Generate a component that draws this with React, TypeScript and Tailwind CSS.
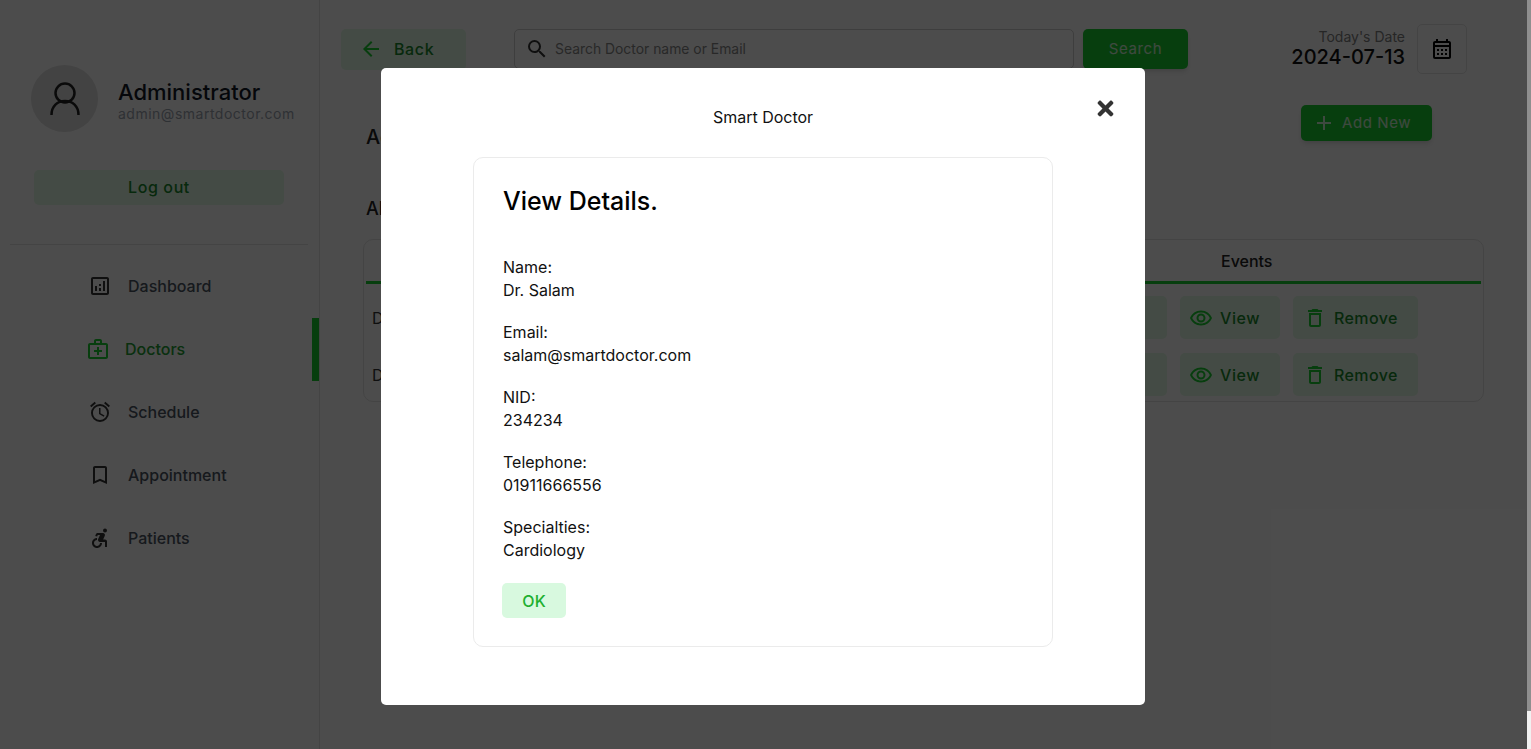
import React from "react";
import {
  MdOutlineAnalytics,
  MdOutlineMedicalServices,
  MdOutlineAlarm,
  MdOutlineBookmarkBorder,
  MdAccessibleForward,
  MdOutlineCalendarMonth,
  MdSearch,
  MdArrowBack,
  MdOutlineRemoveRedEye,
  MdOutlineDelete,
  MdOutlineEdit,
  MdAdd,
} from "react-icons/md";
import { FaTimes } from "react-icons/fa";

const nav = [
  { label: "Dashboard", Icon: MdOutlineAnalytics },
  { label: "Doctors", Icon: MdOutlineMedicalServices, active: true },
  { label: "Schedule", Icon: MdOutlineAlarm },
  { label: "Appointment", Icon: MdOutlineBookmarkBorder },
  { label: "Patients", Icon: MdAccessibleForward },
];

const fields = [
  ["Name:", "Dr. Salam"],
  ["Email:", "salam@smartdoctor.com"],
  ["NID:", "234234"],
  ["Telephone:", "01911666556"],
  ["Specialties:", "Cardiology"],
];

function Row({ name }: { name: string }) {
  return (
    <div className="flex items-center h-[43px] pl-[6px]">
      <span className="text-[16px] text-[#333]">{name}</span>
      <div className="ml-auto flex gap-[13px] pr-[63px]">
        <button className="flex items-center pl-[9px] gap-[7px] w-[110px] h-[43px] rounded-[5px] bg-[#e3fbe6] text-[#1a8a2c] text-[16px] font-medium tracking-[0.6px]">
          <MdOutlineEdit size={24} className="text-[#1ad030]" />
          Edit
        </button>
        <button className="flex items-center pl-[9px] gap-[7px] w-[100px] h-[43px] rounded-[5px] bg-[#e3fbe6] text-[#1a8a2c] text-[16px] font-medium tracking-[0.6px]">
          <MdOutlineRemoveRedEye size={24} className="text-[#1ad030]" />
          View
        </button>
        <button className="flex items-center pl-[10px] gap-[7px] w-[125px] h-[43px] rounded-[5px] bg-[#e3fbe6] text-[#1a8a2c] text-[16px] font-medium tracking-[0.4px]">
          <MdOutlineDelete size={24} className="text-[#1ad030]" />
          Remove
        </button>
      </div>
    </div>
  );
}

export default function App() {
  return (
    <div className="flex h-screen w-full overflow-hidden bg-white font-['Inter',sans-serif]">
      <div className="relative flex-1 flex min-w-0">
        <aside className="w-[320px] shrink-0 border-r border-[#e5e5e5] pt-[65px]">
          <div className="flex items-center pl-[31px]">
            <div className="flex items-center justify-center w-[67px] h-[67px] rounded-full bg-[#e0e0e0]">
              <svg width="30" height="33" viewBox="0 0 30 33" fill="none" stroke="#222" strokeWidth="2.500">
                <circle cx="15" cy="11" r="9.500" />
                <path d="M1.500 33c0-9 6-14 13.500-14s13.500 5 13.500 14" />
              </svg>
            </div>
            <div className="ml-5 mt-[5px]">
              <div className="text-[22px] leading-[26px] font-medium text-[#111827]">Administrator</div>
              <div className="text-[14px] leading-[18px] tracking-[0.5px] text-[#9ca3af]">admin@smartdoctor.com</div>
            </div>
          </div>
          <button className="block ml-[34px] mt-[38px] w-[250px] h-[35px] pb-[2px] rounded-[5px] bg-[#e3fbe6] text-[#1a8a2c] text-[16px] font-medium tracking-[0.6px]">
            Log out
          </button>
          <div className="mx-[10px] mt-[39px] border-t border-[#e5e5e5] w-[298px]" />
          <nav className="mt-[9px]">
            {nav.map(({ label, Icon, active }) => (
              <div key={label} className="relative flex items-center h-[63px]">
                <Icon size={24} className={active ? "ml-[86px] text-[#1ad030]" : "ml-[88px] text-[#333]"} />
                <span
                  className={
                    active
                      ? "ml-[15px] text-[16px] font-medium text-[#22a032]"
                      : "ml-[16px] text-[16px] font-medium text-[#4b5563]"
                  }
                >
                  {label}
                </span>
                {active && <div className="absolute right-0 top-[1px] w-[7px] h-[63px] bg-[#1ad030]" />}
              </div>
            ))}
          </nav>
        </aside>

        <main className="flex-1 min-w-0 pl-[21px] pr-[43px]">
          <div className="flex items-center h-[50px] mt-[24px]">
            <button className="flex items-center pl-[18px] gap-[11px] w-[125px] h-[41px] rounded-[5px] bg-[#e3fbe6] text-[#1a8a2c] text-[16px] font-medium tracking-[0.6px]">
              <MdArrowBack size={24} className="text-[#1ad030]" />
              Back
            </button>
            <div className="ml-[48px] flex items-center w-[560px] h-[40px] rounded-[5px] border border-[#cfcfcf] pl-[10px] bg-white">
              <MdSearch size={24} className="text-[#333]" />
              <span className="ml-[6px] text-[13.9px] text-[#888]">Search Doctor name or Email</span>
            </div>
            <button className="ml-[9px] w-[105px] h-[40px] rounded-[5px] bg-[#1ad030] text-white/80 text-[15px] font-normal tracking-[0.6px] shadow-md">
              Search
            </button>
            <div className="ml-auto text-right mr-[12px]">
              <div className="text-[14px] leading-[15px] text-[#808080]">Today's Date</div>
              <div className="text-[20px] leading-[26px] font-medium text-[#111]">2024-07-13</div>
            </div>
            <div className="flex items-center justify-center w-[50px] h-[50px] rounded-[5px] border border-[#e5e5e5] mr-[17px]">
              <MdOutlineCalendarMonth size={24} className="text-black" />
            </div>
          </div>

          <div className="flex items-start mt-[31px]">
            <div className="ml-[25px] mt-[19px] text-[20px] leading-[26px] font-medium text-[#222]">Add New Doctor</div>
            <button className="ml-auto mr-[52px] flex items-center pl-[11px] gap-[6px] w-[131px] h-[36px] rounded-[5px] bg-[#1ad030] text-white/80 text-[15px] font-normal tracking-[0.6px] shadow-md">
              <MdAdd size={24} />
              Add New
            </button>
          </div>

          <div className="ml-[25px] mt-[46px] text-[18px] leading-[26px] font-medium text-[#222]">All Doctors</div>

          <div className="ml-[22px] mt-[17px] h-[163px] rounded-[10px] border border-[#e5e5e5] px-[2px]">
            <div className="flex h-[44px] border-b-[3px] border-[#1ad030]">
              <span className="ml-[855px] w-[50px] leading-[43px] text-[16px] font-medium text-[#222] text-center">Events</span>
            </div>
            <div className="flex flex-col gap-[14px] pt-[12px]">
              <Row name="Dr. Salam" />
              <Row name="Dr. Kamal" />
            </div>
          </div>
        </main>

        <div className="absolute inset-0 pr-[1px] bg-black/70 flex justify-center items-start">
          <div className="relative mt-[68px] w-[764px] h-[637px] rounded-[5px] bg-white">
            <div className="pt-[39px] text-center text-[16px] leading-[20px] text-[#111]">Smart Doctor</div>
            <FaTimes className="absolute left-[713px] top-[29px] text-[#333]" size={23} />
            <div className="ml-[92px] mt-[30px] w-[580px] h-[490px] rounded-[10px] border border-[#ebebeb] pt-[28px] pl-[29px]">
              <h2 className="text-[25px] leading-[30px] font-medium text-black">View Details.</h2>
              <div className="mt-[40px]">
                {fields.map(([k, v]) => (
                  <div key={k} className="mb-[19px] text-[16px] leading-[23px] text-[#111]">
                    <div>{k}</div>
                    <div>{v}</div>
                  </div>
                ))}
              </div>
              <button className="-ml-px mt-[21px] block w-[64px] h-[35px] rounded-[5px] bg-[#d8f9df] text-[#1eb030] text-[16px] font-medium">
                OK
              </button>
            </div>
          </div>
        </div>
      </div>
      <div className="w-[4px] shrink-0 h-full flex flex-col">
        <div className="h-[711px] bg-[#8f8f8f]" />
        <div className="flex-1 bg-[#f1f1f1]" />
      </div>
    </div>
  );
}
